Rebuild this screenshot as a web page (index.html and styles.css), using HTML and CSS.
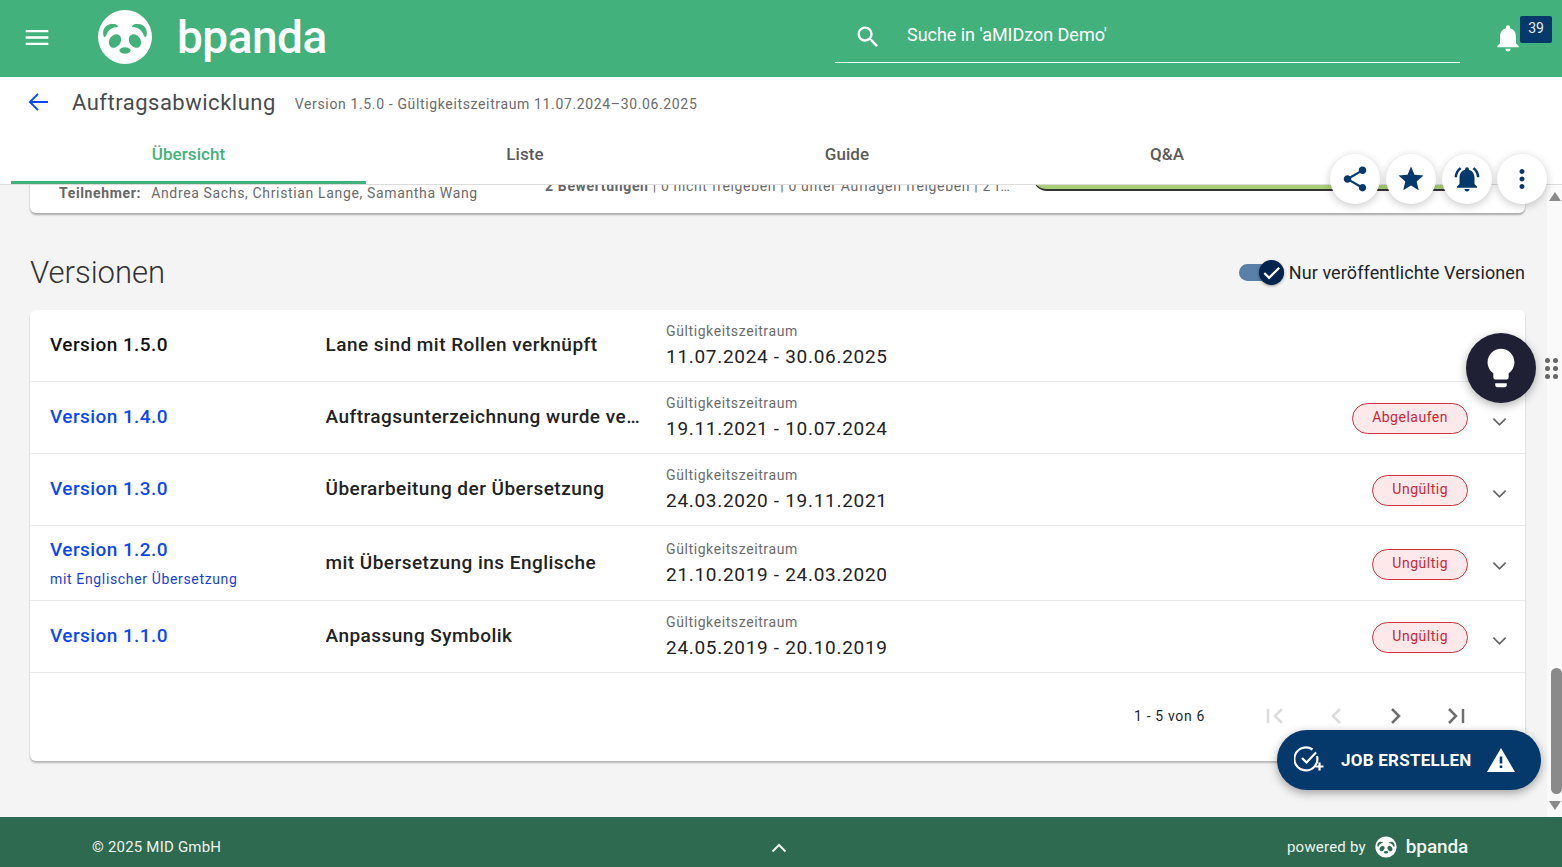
FILE: index.html
```html
<!DOCTYPE html>
<html lang="de">
<head>
<meta charset="utf-8">
<title>bpanda</title>
<link rel="stylesheet" href="styles.css">
</head>
<body>
<svg class="defs" width="0" height="0">
  <symbol id="panda" viewBox="-28 -28 56 56">
    <circle class="p-w" r="27"/>
    <path class="p-g" d="M-21 0C-24-7-19-14-12-13-8-13-7-11-7-10-13-10-17-7-19-1-20 0-21 0-21 0ZM21 0C24-7 19-14 12-13 8-13 7-11 7-10 13-10 17-7 19-1 20 0 21 0 21 0Z"/>
    <ellipse class="p-g" cx="-10" cy="4" rx="5.6" ry="7.2" transform="rotate(35 -10 4)"/>
    <ellipse class="p-g" cx="10" cy="4" rx="5.6" ry="7.2" transform="rotate(-35 10 4)"/>
    <ellipse class="p-g" cx="0" cy="13.5" rx="5.6" ry="3.2"/>
  </symbol>
</svg>
<div class="app">
  <header class="topbar">
    <svg class="menu" viewBox="0 0 24 18"><path d="M0 1h24v2.4H0zM0 7.800h24v2.400H0zM0 14.600h24V17H0z"/></svg>
    <svg class="logo"><use href="#panda"/></svg>
    <span class="brand">bpanda</span>
    <div class="search">
      <svg class="search-icon" viewBox="0 0 24 24"><path d="M15.5 14h-.79l-.28-.27A6.470 6.470 0 0 0 16 9.500 6.500 6.500 0 1 0 9.500 16c1.610 0 3.090-.59 4.230-1.570l.27.28v.79l5 4.990L20.490 19l-4.990-5zm-6 0C7.010 14 5 11.990 5 9.500S7.010 5 9.500 5 14 7.010 14 9.500 11.990 14 9.500 14z"/></svg>
      <span>Suche in 'aMIDzon Demo'</span>
    </div>
    <div class="notify">
      <svg class="bell" viewBox="0 0 24 24"><path d="M12 22c1.100 0 2-.9 2-2h-4c0 1.100.9 2 2 2zm6-6v-5c0-3.070-1.630-5.640-4.500-6.320V4c0-.83-.67-1.500-1.500-1.500s-1.500.67-1.500 1.500v.68C7.640 5.360 6 7.920 6 11v5l-2 2v1h16v-1l-2-2z"/></svg>
      <span class="badge">39</span>
    </div>
  </header>

  <section class="titlebar">
    <svg class="back" viewBox="0 0 22 20"><path d="M21 10H2M10.500 1.500 2 10l8.500 8.500"/></svg>
    <h1>Auftragsabwicklung</h1>
    <span class="validity">Version 1.5.0 - Gültigkeitszeitraum 11.07.2024–30.06.2025</span>
  </section>

  <nav class="tabs">
    <a class="tab tab-active">Übersicht</a>
    <a class="tab tab-liste">Liste</a>
    <a class="tab tab-guide">Guide</a>
    <a class="tab tab-qa">Q&amp;A</a>
  </nav>

  <div class="workspace">
    <main class="content">
      <div class="content-inner">
        <section class="summary">
          <div class="people"><b>Teilnehmer:</b><span>Andrea Sachs, Christian Lange, Samantha Wang</span></div>
          <div class="reviews"><b>2 Bewertungen</b> | 0 nicht freigeben | 0 unter Auflagen freigeben | 2 f…</div>
          <div class="progress"></div>
        </section>

        <div class="section-head">
          <h2>Versionen</h2>
          <label class="toggle-wrap">
            <span class="toggle"><span class="knob"><svg viewBox="0 0 24 24"><path d="M4.500 12.500l5 5L20 7"/></svg></span></span>
            <span>Nur veröffentlichte Versionen</span>
          </label>
        </div>

        <section class="versions">
          <div class="row">
            <div class="col-ver"><span class="ver ver-current">Version 1.5.0</span></div>
            <div class="col-title">Lane sind mit Rollen verknüpft</div>
            <div class="col-date"><small>Gültigkeitszeitraum</small><span>11.07.2024 - 30.06.2025</span></div>
          </div>
          <div class="row">
            <div class="col-ver"><a class="ver">Version 1.4.0</a></div>
            <div class="col-title">Auftragsunterzeichnung wurde verschoben</div>
            <div class="col-date"><small>Gültigkeitszeitraum</small><span>19.11.2021 - 10.07.2024</span></div>
            <span class="chip">Abgelaufen</span>
            <svg class="chev" viewBox="0 0 16 10"><path d="M1.500 1.500 8 8l6.500-6.500"/></svg>
          </div>
          <div class="row">
            <div class="col-ver"><a class="ver">Version 1.3.0</a></div>
            <div class="col-title">Überarbeitung der Übersetzung</div>
            <div class="col-date"><small>Gültigkeitszeitraum</small><span>24.03.2020 - 19.11.2021</span></div>
            <span class="chip">Ungültig</span>
            <svg class="chev" viewBox="0 0 16 10"><path d="M1.500 1.500 8 8l6.500-6.500"/></svg>
          </div>
          <div class="row row-tall">
            <div class="col-ver"><a class="ver">Version 1.2.0</a><a class="ver-note">mit Englischer Übersetzung</a></div>
            <div class="col-title">mit Übersetzung ins Englische</div>
            <div class="col-date"><small>Gültigkeitszeitraum</small><span>21.10.2019 - 24.03.2020</span></div>
            <span class="chip">Ungültig</span>
            <svg class="chev" viewBox="0 0 16 10"><path d="M1.500 1.500 8 8l6.500-6.500"/></svg>
          </div>
          <div class="row">
            <div class="col-ver"><a class="ver">Version 1.1.0</a></div>
            <div class="col-title">Anpassung Symbolik</div>
            <div class="col-date"><small>Gültigkeitszeitraum</small><span>24.05.2019 - 20.10.2019</span></div>
            <span class="chip">Ungültig</span>
            <svg class="chev" viewBox="0 0 16 10"><path d="M1.500 1.500 8 8l6.500-6.500"/></svg>
          </div>
          <div class="pager">
            <span class="pager-text">1 - 5 von 6</span>
            <svg class="pg pg-off" viewBox="0 0 20 18"><path d="M2 2v14M16 2 9 9l7 7"/></svg>
            <svg class="pg pg-off" viewBox="0 0 20 18"><path d="M14 2 7 9l7 7"/></svg>
            <svg class="pg" viewBox="0 0 20 18"><path d="M6 2l7 7-7 7"/></svg>
            <svg class="pg" viewBox="0 0 20 18"><path d="M3 2l7 7-7 7M17 2v14"/></svg>
          </div>
        </section>
      </div>
    </main>
    <aside class="scrollbar">
      <span class="arrow-up"></span>
      <span class="thumb"></span>
      <span class="arrow-down"></span>
    </aside>
  </div>

  <footer class="footer">
    <span class="copy">© 2025 MID GmbH</span>
    <svg class="foot-chev" viewBox="0 0 16 10"><path d="M1.500 8.500 8 2l6.500 6.500"/></svg>
    <span class="powered">powered by</span>
    <svg class="foot-logo"><use href="#panda"/></svg>
    <span class="foot-brand">bpanda</span>
  </footer>

  <div class="actions">
    <button class="act"><svg viewBox="0 0 24 24"><path d="M18 16.080c-.76 0-1.440.3-1.960.77L8.910 12.700c.05-.23.09-.46.09-.7s-.04-.47-.09-.7l7.050-4.110c.54.5 1.250.81 2.040.81 1.660 0 3-1.340 3-3s-1.340-3-3-3-3 1.340-3 3c0 .24.04.47.09.7L8.040 9.810C7.500 9.310 6.790 9 6 9c-1.660 0-3 1.340-3 3s1.340 3 3 3c.79 0 1.500-.31 2.040-.81l7.120 4.160c-.05.21-.08.43-.08.65 0 1.610 1.310 2.920 2.920 2.920s2.920-1.310 2.920-2.920-1.310-2.920-2.920-2.920z"/></svg></button>
    <button class="act"><svg viewBox="0 0 24 24"><path d="M12 17.270 18.180 21l-1.640-7.030L22 9.240l-7.190-.61L12 2 9.190 8.630 2 9.240l5.460 4.730L5.820 21z"/></svg></button>
    <button class="act"><svg viewBox="0 0 24 24"><path d="M7.580 4.080 6.150 2.650C3.750 4.480 2.170 7.300 2.030 10.500h2c.15-2.650 1.510-4.970 3.550-6.420zM19.970 10.500h2c-.15-3.200-1.730-6.020-4.120-7.850l-1.420 1.430c2.020 1.450 3.390 3.770 3.540 6.420zM18 11c0-3.070-1.640-5.640-4.500-6.320V4c0-.83-.67-1.500-1.500-1.500s-1.500.67-1.500 1.500v.68C7.630 5.360 6 7.920 6 11v5l-2 2v1h16v-1l-2-2v-5zm-6 11c.14 0 .27-.01.4-.04.65-.14 1.180-.58 1.440-1.180.1-.24.150-.5.150-.78h-4c.01 1.100.9 2 2.010 2z"/></svg></button>
    <button class="act act-more"><svg viewBox="0 0 24 24"><path d="M12 8c1.100 0 2-.9 2-2s-.9-2-2-2-2 .9-2 2 .9 2 2 2zm0 2c-1.100 0-2 .9-2 2s.9 2 2 2 2-.9 2-2-.9-2-2-2zm0 6c-1.100 0-2 .9-2 2s.9 2 2 2 2-.9 2-2-.9-2-2-2z"/></svg></button>
  </div>

  <div class="idea">
    <button class="idea-btn"><svg viewBox="0 0 24 24"><path d="M9 21c0 .55.45 1 1 1h4c.55 0 1-.45 1-1v-1H9v1zm3-19C8.140 2 5 5.140 5 9c0 2.380 1.190 4.470 3 5.740V17c0 .55.45 1 1 1h6c.55 0 1-.45 1-1v-2.260c1.810-1.270 3-3.360 3-5.740 0-3.860-3.140-7-7-7z"/></svg></button>
    <span class="grip"><i></i><i></i><i></i><i></i><i></i><i></i></span>
  </div>

  <button class="job">
    <svg class="job-icon" viewBox="0 0 30 28"><path d="M22 6.500 12.500 16.500 8 12M23 10a11.500 11.500 0 1 1-4.500-6.500M21.500 20.500h8M25.500 16.500v8"/></svg>
    <span>JOB ERSTELLEN</span>
    <svg class="warn" viewBox="0 0 28 24"><path fill-rule="evenodd" d="M14 0 28 24H0zM12.700 8.500h2.600v7h-2.600zM12.700 17.500h2.600v2.600h-2.600z"/></svg>
  </button>
</div>
</body>
</html>
```

FILE: styles.css
```css
* { box-sizing: border-box; }
html, body { margin: 0; height: 100%; overflow: hidden; }
body { font-family: Roboto, "Liberation Sans", sans-serif; color: #212529; }
.defs { position: absolute; }
a { cursor: pointer; }
button { border: 0; padding: 0; font: inherit; cursor: pointer; }

.app { position: relative; display: flex; flex-direction: column; height: 867px; width: 1562px; background: #fff; }

/* top bar */
.topbar { --panda-bg: #43b17b; flex: 0 0 77px; height: 77px; display: flex; align-items: center; background: #43b17b; color: #fff; padding-left: 25px; }
.menu { width: 24px; height: 17px; fill: #fff; flex: none; margin-top: -3px; }
.logo { width: 56px; height: 56px; margin: -4px 0 0 48px; flex: none; }
.p-w { fill: #fff; }
.p-g { fill: var(--panda-bg); }
.brand { margin-left: 24px; font-size: 46px; font-weight: 500; letter-spacing: -.5px; line-height: 56px; margin-top: -3px; width: 658px; flex: none; }
.search { width: 625px; height: 63px; flex: none; margin-top: -14px; border-bottom: 1px solid #fff; display: flex; align-items: center; padding: 10px 0 0 19px; font-size: 18px; letter-spacing: -.03px; }
.search-icon { width: 28px; height: 28px; fill: #fff; margin-right: 25px; flex: none; margin-top: 1px; }
.search span { margin-top: -3px; }
.notify { position: relative; flex: 1; align-self: stretch; }
.bell { position: absolute; left: 32px; top: 22px; width: 32px; height: 32px; fill: #fff; }
.badge { position: absolute; left: 60px; top: 16px; width: 32px; height: 27px; background: #05386b; border-radius: 2px; color: #e8eef5; font-size: 14px; line-height: 25px; text-align: center; }

/* title */
.titlebar { flex: 0 0 55px; height: 55px; display: flex; align-items: center; padding: 0 0 4px 28px; }
.back { width: 21px; height: 20px; fill: none; stroke: #0d47f0; stroke-width: 2; flex: none; margin-top: -2px; }
h1 { margin: 0 0 0 23px; font-size: 22px; font-weight: 400; letter-spacing: .5px; color: #4a4a4a; }
.validity { margin-left: 19px; font-size: 14px; letter-spacing: .64px; color: #6b6b6b; margin-top: 3px; }

/* tabs */
.tabs { flex: 0 0 53px; height: 53px; display: flex; padding-left: 11px; border-bottom: 1px solid #dcdcdc; position: relative; background: #fff; z-index: 2; }
.tab { display: flex; align-items: center; justify-content: center; height: 52px; font-size: 17px; font-weight: 500; letter-spacing: .05px; color: #5a5a5a; padding-bottom: 9px; }
.tab-active { width: 355px; color: #43b17b; border-bottom: 3px solid #43b17b; padding-bottom: 6px; }
.tab-liste { width: 318px; }
.tab-guide { width: 326px; }
.tab-qa { width: 314px; }

/* workspace */
.workspace { flex: 1; min-height: 0; display: flex; background: #f4f4f4; }
.content { flex: 1; min-width: 0; overflow: hidden; padding: 0 22px 0 30px; }
.content-inner { margin-top: -31px; }

.summary { position: relative; height: 59px; background: #fff; border-radius: 0 0 6px 6px; box-shadow: 0 2px 2px rgba(0,0,0,.3); display: flex; align-items: flex-start; font-size: 14px; letter-spacing: .65px; color: #6b6b6b; }
.people { margin: 31px 0 0 29px; width: 486px; flex: none; white-space: nowrap; }
.people b { font-weight: 700; margin-right: 10px; color: #666; }
.reviews { margin-top: 24px; width: 488px; flex: none; white-space: nowrap; overflow: hidden; }
.reviews b { color: #666; }
.progress { width: 427px; height: 37px; flex: none; background: #a9cf7a; border-bottom: 2px solid #333; border-radius: 0 0 14px 14px; }

.section-head { display: flex; justify-content: space-between; align-items: center; height: 40px; margin: 39px 0 18px; }
h2 { margin: 0; font-size: 31px; font-weight: 300; color: #333; }
.toggle-wrap { display: flex; align-items: center; font-size: 18px; letter-spacing: .1px; color: #212529; gap: 5px; }
.toggle { position: relative; display: block; width: 45px; height: 17px; background: #5a7fa8; border-radius: 9px; }
.knob { position: absolute; right: 0; top: -4px; width: 25px; height: 25px; background: #04234d; border-radius: 50%; box-shadow: 0 1px 3px rgba(0,0,0,.4); display: flex; align-items: center; justify-content: center; }
.knob svg { width: 23px; height: 23px; fill: none; stroke: #fff; stroke-width: 2.400; }

.versions { background: #fff; border-radius: 6px; box-shadow: 0 2px 2px rgba(0,0,0,.25); height: 451px; }
.row { position: relative; display: flex; align-items: center; height: 72px; padding-left: 20px; border-bottom: 1px solid #e8e8e8; }
.row-tall { height: 75px; }
.col-ver { width: 275.500px; flex: none; display: flex; flex-direction: column; padding-bottom: 2px; }
.ver { font-size: 19px; font-weight: 500; letter-spacing: .43px; color: #0d47f0; }
.ver-current { color: #111; }
.ver-note { font-size: 14px; letter-spacing: .65px; color: #1a3fd0; margin-top: 10px; }
.col-title { width: 320px; flex: none; font-size: 19px; font-weight: 500; letter-spacing: .47px; color: #222; white-space: nowrap; overflow: hidden; text-overflow: ellipsis; margin-right: 20.500px; padding-bottom: 2px; }
.col-date { display: flex; flex-direction: column; flex: 1; padding-top: 1px; }
.col-date small { font-size: 14px; letter-spacing: .6px; color: #6b6b6b; line-height: 16px; }
.col-date span { font-size: 19px; letter-spacing: .7px; color: #222; line-height: 24px; margin-top: 6px; }
.chip { height: 31px; padding: 0 19px; margin-top: 2px; border: 1px solid #d0323f; border-radius: 16px; background: #fde8ea; color: #c62835; font-size: 14px; letter-spacing: .5px; line-height: 27px; flex: none; margin-right: 57px; }
.chev { position: absolute; right: 18px; top: 35px; width: 15px; height: 10px; fill: none; stroke: #666; stroke-width: 1.800; }

.pager { display: flex; align-items: center; height: 85px; padding: 0 52px 0 1104px; font-size: 14px; letter-spacing: .65px; }
.pager-text { width: 122px; flex: none; margin-right: 9.500px; }
.pg { width: 20px; height: 18px; fill: none; stroke: #6e6e6e; stroke-width: 2.500; flex: none; margin-right: 40px; }
.pg:last-child { margin-right: 0; }
.pg-off { stroke: #dcdcdc; }

.scrollbar { flex: 0 0 15px; width: 15px; display: flex; flex-direction: column; align-items: center; background: #fafafa; padding-top: 7px; }
.arrow-up { width: 0; height: 0; border: 6px solid transparent; border-top: 0; border-bottom: 9px solid #8a8a8a; }
.thumb { width: 11px; height: 126px; margin: 467px 0 0 3px; background: #8a8a8a; border-radius: 6px; }
.arrow-down { width: 0; height: 0; margin-top: 7px; border: 6px solid transparent; border-bottom: 0; border-top: 9px solid #8a8a8a; }

/* footer */
.footer { --panda-bg: #2d6a4f; flex: 0 0 50px; height: 50px; background: #2d6a4f; color: #eef4f0; display: flex; align-items: center; padding: 10px 0 0 92px; font-size: 15px; letter-spacing: .2px; }
.copy { width: 679px; flex: none; }
.foot-chev { width: 16px; height: 10px; fill: none; stroke: #eef4f0; stroke-width: 2; flex: none; margin-top: 2px; }
.powered { margin-left: 500px; flex: none; }
.foot-logo { width: 22px; height: 22px; flex: none; margin-left: 9px; }
.foot-brand { margin-left: 9px; font-size: 19px; font-weight: 500; letter-spacing: -.1px; margin-top: -1px; }

/* floating */
.actions { position: absolute; left: 1330px; top: 154px; display: flex; gap: 6px; z-index: 5; }
.act { width: 50px; height: 50px; border-radius: 50%; background: #fff; box-shadow: 0 2px 8px rgba(0,0,0,.22); display: flex; align-items: center; justify-content: center; }
.act svg { width: 30px; height: 30px; fill: #05386b; }
.act-more { margin-left: -1px; }
.idea { position: absolute; left: 1466px; top: 333px; display: flex; align-items: center; z-index: 5; gap: 8px; }
.idea-btn { width: 70px; height: 70px; border-radius: 50%; background: #1f2033; box-shadow: 0 3px 10px rgba(0,0,0,.3); display: flex; align-items: center; justify-content: center; }
.idea-btn svg { width: 46px; height: 46px; fill: #fff; }
.grip { display: grid; grid-template-columns: 5px 5px; gap: 3px 3px; margin-left: 1px; }
.grip i { width: 5px; height: 5px; background: #666; border-radius: 50%; }
.job { position: absolute; left: 1277px; top: 730px; width: 264px; height: 60px; border-radius: 30px; background: #05386b; color: #fff; box-shadow: 0 3px 10px rgba(0,0,0,.35); display: flex; align-items: center; padding-left: 17px; font-size: 17px; font-weight: 700; letter-spacing: .25px; z-index: 5; }
.job-icon { width: 30px; height: 28px; fill: none; stroke: #fff; stroke-width: 2.200; flex: none; margin-right: 17px; }
.warn { width: 28px; height: 24px; fill: #fff; flex: none; margin-left: 15px; }
```
